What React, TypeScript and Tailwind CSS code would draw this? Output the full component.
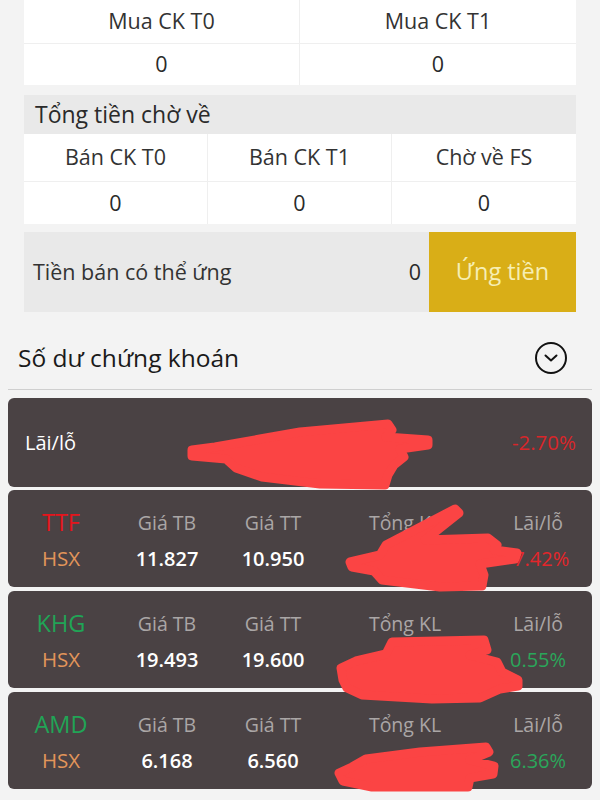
import React from "react";

type Row = {
  code: string;
  codeColor: string;
  tb: string;
  tt: string;
  pl: string;
  plColor: string;
};

const rows: Row[] = [
  { code: "TTF", codeColor: "text-[#e5141c]", tb: "11.827", tt: "10.950", pl: "-7.42%", plColor: "text-[#e3262b]" },
  { code: "KHG", codeColor: "text-[#21a456]", tb: "19.493", tt: "19.600", pl: "0.55%", plColor: "text-[#2aa65a]" },
  { code: "AMD", codeColor: "text-[#21a456]", tb: "6.168", tt: "6.560", pl: "6.36%", plColor: "text-[#2aa65a]" },
];

function StockCard({ r }: { r: Row }) {
  return (
    <div className="h-[97px] rounded-[6px] bg-[#4a4244] grid grid-cols-[106px_106px_106px_158px_108px] grid-rows-[36px_36px] content-center pt-[4px]">
      <div className={`flex items-center justify-center text-[23.5px] ${r.codeColor}`}>{r.code}</div>
      <div className="flex items-center justify-center text-[19.5px] text-[#aaa6a6]">Giá TB</div>
      <div className="flex items-center justify-center text-[19.5px] text-[#aaa6a6]">Giá TT</div>
      <div className="flex items-center justify-center text-[19.5px] text-[#aaa6a6]">Tổng KL</div>
      <div className="flex items-center justify-center text-[19.5px] text-[#aaa6a6]">Lãi/lỗ</div>
      <div className="flex items-center justify-center text-[20.5px] text-[#e2955a]">HSX</div>
      <div className="flex items-center justify-center text-[20px] font-semibold text-white">{r.tb}</div>
      <div className="flex items-center justify-center text-[20px] font-semibold text-white">{r.tt}</div>
      <div className="flex items-center justify-center text-[20px] font-semibold text-white"></div>
      <div className={`flex items-center justify-center text-[20px] ${r.plColor}`}>{r.pl}</div>
    </div>
  );
}

export default function App() {
  return (
    <div className="relative w-[600px] h-[800px] overflow-hidden bg-[#f3f3f3] font-['Open_Sans',sans-serif] text-[#2a2a2a]">
      <div className="px-[24px]">
        <div className="grid grid-cols-2 bg-white">
          <div className="h-[44px] flex items-center justify-center text-[21.5px] text-[#333] border-r border-b border-[#efefef]">Mua CK T0</div>
          <div className="h-[44px] flex items-center justify-center text-[21.5px] text-[#333] border-b border-[#efefef]">Mua CK T1</div>
          <div className="h-[41px] flex items-center justify-center text-[21.5px] border-r border-[#efefef]">0</div>
          <div className="h-[41px] flex items-center justify-center text-[21.5px]">0</div>
        </div>
        <div className="mt-[10px] h-[39px] bg-[#e9e9e9] flex items-center pl-[11px] text-[23px] text-[#2a2a2a]">Tổng tiền chờ về</div>
        <div className="grid grid-cols-3 bg-white">
          <div className="h-[48px] flex items-center justify-center text-[21.5px] text-[#333] border-r border-b border-[#efefef]">Bán CK T0</div>
          <div className="h-[48px] flex items-center justify-center text-[21.5px] text-[#333] border-r border-b border-[#efefef]">Bán CK T1</div>
          <div className="h-[48px] flex items-center justify-center text-[21.5px] text-[#333] border-b border-[#efefef]">Chờ về FS</div>
          <div className="h-[42px] flex items-center justify-center text-[21.5px] border-r border-[#efefef]">0</div>
          <div className="h-[42px] flex items-center justify-center text-[21.5px] border-r border-[#efefef]">0</div>
          <div className="h-[42px] flex items-center justify-center text-[21.5px]">0</div>
        </div>
        <div className="mt-[8px] h-[80px] bg-[#e9e9e9] flex items-center">
          <div className="flex-1 pl-[9px] text-[21.5px] text-[#333]">Tiền bán có thể ứng</div>
          <div className="mr-[8px] text-[21.5px]">0</div>
          <button className="w-[147px] h-full bg-[#d9ae17] text-[23.5px] text-[#f6eeb4]">Ứng tiền</button>
        </div>
      </div>

      <div className="mt-[30px] h-[32px] flex items-center justify-between pl-[18px] pr-[32px]">
        <div className="text-[24.5px] text-[#1a1a1a]">Số dư chứng khoán</div>
        <svg width="34" height="34" viewBox="0 0 34 34" fill="none" stroke="#111" strokeWidth="2">
          <circle cx="17" cy="17" r="15" />
          <path d="M11.5 14.5 L17 19.5 L22.5 14.5" strokeLinecap="round" strokeLinejoin="round" />
        </svg>
      </div>
      <div className="mt-[15px] mx-[8px] h-px bg-[#cfcfcf]" />

      <div className="mx-[8px] mt-[8px] flex flex-col gap-[4px]">
        <div className="h-[89px] rounded-[6px] bg-[#4a4244] flex items-center justify-between pl-[17px] pr-[16px] mb-[-1px]">
          <div className="text-[20px] text-white">Lãi/lỗ</div>
          <div className="text-[20.5px] text-[#d8262a]">-2.70%</div>
        </div>
        {rows.map((r) => (
          <StockCard key={r.code} r={r} />
        ))}
      </div>

      <svg className="absolute inset-0 pointer-events-none" width="600" height="800" viewBox="0 0 600 800" fill="#fb4444" stroke="#fb4444" strokeWidth="9" strokeLinecap="round" strokeLinejoin="round">
        <path d="M192 450 L215 447 L260 439 L300 432 L388 424 L392 430 L386 437 L428 440 L428 445 L400 449 L404 457 L394 465 L388 475 L385 485 L320 484 L262 477 L236 468 L226 459 L192 456 Z" />
        <path d="M350 562 L380 555 L386 545 L455 509 L459 513 L425 540 L488 538 L497 545 L494 550 L517 553 L515 559 L480 564 L484 575 L482 586 L440 587 L382 580 L374 571 L352 567 Z" />
        <path d="M392 642 L484 640 L487 650 L470 655 L497 662 L502 672 L518 680 L518 686 L500 689 L480 698 L432 699 L362 695 L347 688 L343 680 L341 668 L356 661 L386 654 Z" />
        <path d="M366 759 L420 752 L486 747 L489 752 L470 760 L494 766 L493 774 L470 778 L468 787 L372 787 L343 781 L339 773 L352 767 Z" />
      </svg>
    </div>
  );
}
